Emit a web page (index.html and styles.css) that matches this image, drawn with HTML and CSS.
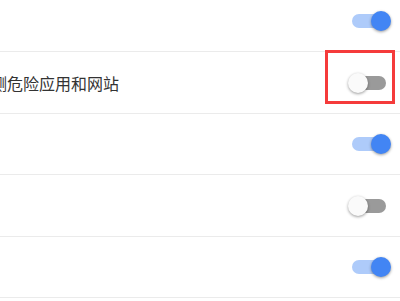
FILE: index.html
```html
<!DOCTYPE html>
<html lang="zh">
<head>
<meta charset="utf-8">
<link rel="stylesheet" href="styles.css">
</head>
<body>
<div class="list">
  <div class="row">
    <span class="label"></span>
    <span class="toggle on"><span class="track"></span><span class="knob"></span></span>
  </div>
  <div class="row">
    <span class="label cut">检测危险应用和网站</span>
    <span class="toggle"><span class="track"></span><span class="knob"></span></span>
    <span class="highlight"></span>
  </div>
  <div class="row">
    <span class="label"></span>
    <span class="toggle on"><span class="track"></span><span class="knob"></span></span>
  </div>
  <div class="row">
    <span class="label"></span>
    <span class="toggle"><span class="track"></span><span class="knob"></span></span>
  </div>
  <div class="row">
    <span class="label"></span>
    <span class="toggle on"><span class="track"></span><span class="knob"></span></span>
  </div>
</div>
</body>
</html>
```
FILE: styles.css
```css
html, body {
  margin: 0;
  padding: 0;
  background: #ffffff;
  overflow: hidden;
  width: 400px;
  height: 301px;
}
body {
  font-family: "Noto Sans CJK SC", "Noto Sans", sans-serif;
  color: #333333;
}
.list {
  margin-top: -9.5px;
  display: flex;
  flex-direction: column;
}
.row {
  position: relative;
  box-sizing: border-box;
  height: 61.5px;
  border-bottom: 1px solid #ebebeb;
  display: flex;
  align-items: center;
  justify-content: space-between;
  padding-right: 9px;
  padding-top: 1px;
}
.label {
  font-size: 16px;
  line-height: 20px;
  white-space: nowrap;
}
.label.cut {
  margin-left: -25px;
}
.toggle {
  position: relative;
  width: 43px;
  height: 20px;
  flex: none;
}
.track {
  position: absolute;
  left: 4px;
  top: 3px;
  width: 34px;
  height: 14px;
  border-radius: 7px;
  background: #9a9a9a;
}
.knob {
  position: absolute;
  left: 0;
  top: 0;
  width: 20px;
  height: 20px;
  border-radius: 50%;
  background: #fafafa;
  box-shadow: 0 1px 3px rgba(0, 0, 0, 0.4);
}
.toggle.on .track {
  background: #aecbfa;
}
.toggle.on .knob {
  left: 23px;
  background: #4285f4;
}
.highlight {
  position: absolute;
  top: -2px;
  right: 5px;
  width: 70px;
  height: 54px;
  box-sizing: border-box;
  border: 3px solid #f53b3b;
}
```
